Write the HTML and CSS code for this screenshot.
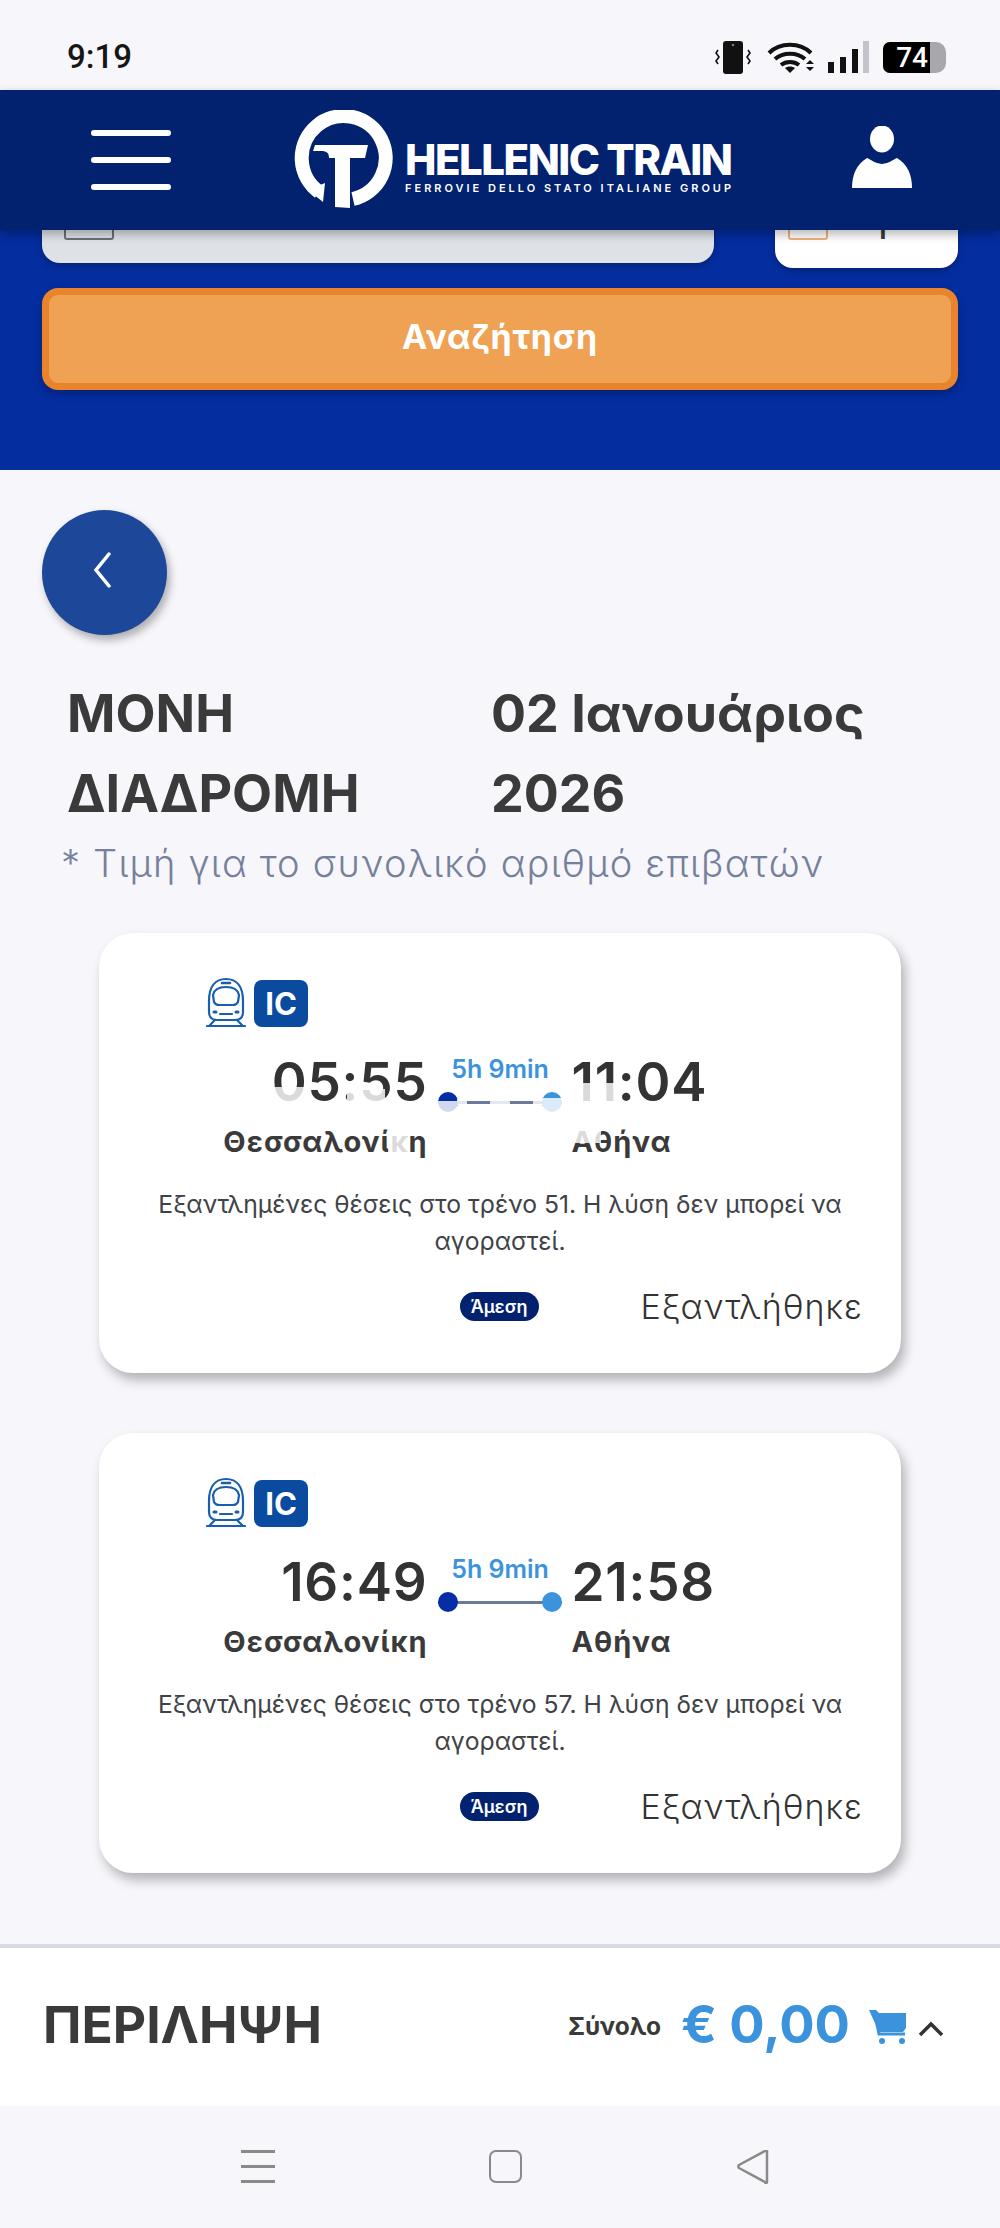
FILE: index.html
```html
<!DOCTYPE html>
<html lang="el">
<head>
  <meta charset="UTF-8" />
  <meta name="viewport" content="width=device-width, initial-scale=1.0" />
  <title>Hellenic Train</title>
  <link rel="stylesheet" href="styles.css">
</head>
<body>
  <svg class="defs" width="0" height="0">
    <symbol id="train" viewBox="0 0 40 50">
      <g fill="none" stroke="#1a5fae" stroke-width="2.200" stroke-linecap="round" stroke-linejoin="round">
        <path d="M3 24C3 10 9 2 20 2s17 8 17 22v11c0 5-3 8-8 8H11c-5 0-8-3-8-8z"/>
        <path d="M7 18c1-5 5-8 13-8s12 3 13 8l-1 7c-1 2-3 3-5 3H13c-2 0-4-1-5-3z"/>
        <path d="M16 6h8" stroke-width="2.600"/>
        <path d="M8 35h2M30 35h2" stroke-width="3"/>
        <path d="M14 37h12M9 43l-5 5M31 43l5 5M1 49h38"/>
      </g>
    </symbol>
  </svg>

  <div class="status-bar">
    <span class="clock">9:19</span>
    <div class="status-icons">
      <svg class="vibrate" width="36" height="34" viewBox="0 0 36 34">
        <rect x="8" y="1" width="20" height="33" rx="3" fill="#111"/>
        <circle cx="18" cy="5" r="1.300" fill="#777"/>
        <path d="M3 10l-2 3 3 4-3 4 2 3M33 10l2 3-3 4 3 4-2 3" fill="none" stroke="#111" stroke-width="1.600"/>
      </svg>
      <svg width="48" height="34" viewBox="0 0 48 34">
        <g fill="none" stroke="#111" stroke-width="4">
          <path d="M2 13C13 2 33 2 44 13"/>
          <path d="M8 19c8-7 22-7 30 0"/>
          <path d="M14 25c5-4 13-4 18 0"/>
        </g>
        <path d="M18 28c3-2 7-2 10 0l-5 5z" fill="#111"/>
        <path d="M43 20l4 4h-8zM39 27h8l-4 4z" fill="#111"/>
      </svg>
      <svg width="44" height="34" viewBox="0 0 44 34">
        <rect x="1" y="22" width="6" height="11" fill="#111"/>
        <rect x="13" y="17" width="6" height="16" fill="#111"/>
        <rect x="25" y="9" width="6" height="24" fill="#111"/>
        <rect x="36" y="1" width="6" height="32" fill="#c4c2cb"/>
      </svg>
      <div class="battery"><span class="battery-level">74</span></div>
    </div>
  </div>

  <header class="top-nav">
    <div class="burger"><span></span><span></span><span></span></div>
    <div class="logo">
      <svg class="logo-mark" width="104" height="100" viewBox="0 0 104 100">
        <path d="M26 82A42 42 0 1 1 60 89" fill="none" stroke="#fff" stroke-width="14"/>
        <path d="M15 80l17-7-2 19z" fill="#fff"/>
        <path d="M22 35h53l-3 13H57v50l-15 -1V48H36c0-5-2-7-8-7h-8z" fill="#fff"/>
      </svg>
      <div class="logo-text">
        <div class="logo-name">HELLENIC TRAIN</div>
        <div class="logo-sub">FERROVIE DELLO STATO ITALIANE GROUP</div>
      </div>
    </div>
    <svg class="user-icon" width="60" height="64" viewBox="0 0 60 64">
      <ellipse cx="30" cy="13" rx="12" ry="13.500" fill="#fff"/>
      <path d="M0 62c0-14 5-24 15-30 5 2 7 5 15 6 8-1 10-4 15-6 10 6 15 16 15 30z" fill="#fff"/>
    </svg>
  </header>

  <section class="search-band">
    <div class="search-fields">
      <div class="field field-date"><span class="field-icon"></span></div>
      <div class="field field-pax"><span class="field-icon field-icon-pax"></span><span class="pax-count">1</span></div>
    </div>
    <button class="search-btn">Αναζήτηση</button>
  </section>

  <main class="results">
    <button class="back-btn">
      <svg width="19" height="36" viewBox="0 0 19 36"><path d="M16 2L3 18l13 16" fill="none" stroke="#fff" stroke-width="3.500" stroke-linecap="round"/></svg>
    </button>

    <div class="trip-title">
      <h2>ΜΟΝΗ ΔΙΑΔΡΟΜΗ</h2>
      <h2>02 Ιανουάριος 2026</h2>
    </div>
    <p class="price-note">* Τιμή για το συνολικό αριθμό επιβατών</p>

    <article class="card">
      <div class="train-type">
        <svg class="train-icon" width="40" height="50"><use href="#train"/></svg>
        <span class="ic-badge">IC</span>
      </div>
      <div class="route">
        <div class="stop stop-from">
          <div class="time">05:55</div>
          <div class="station">Θεσσαλονίκη</div>
        </div>
        <div class="leg">
          <div class="duration">5h 9min</div>
          <div class="line"><span class="dot dot-start"></span><span class="dot dot-end"></span></div>
        </div>
        <div class="stop">
          <div class="time">11:04</div>
          <div class="station">Αθήνα</div>
        </div>
      </div>
      <p class="message">Εξαντλημένες θέσεις στο τρένο 51. Η λύση δεν μπορεί να αγοραστεί.</p>
      <div class="card-foot">
        <span class="direct">Άμεση</span>
        <span class="sold-out">Εξαντλήθηκε</span>
      </div>
      <!-- half painted strips seen in the capture -->
      <span class="fade fade-a"></span>
      <span class="fade fade-b"></span>
      <span class="fade fade-c"></span>
      <span class="fade fade-d"></span>
      <span class="fade fade-e"></span>
      <span class="fade fade-f"></span>
      <span class="fade fade-g"></span>
      <span class="fade fade-h"></span>
      <span class="fade fade-i"></span>
      <span class="fade fade-j"></span>
      <span class="fade fade-k"></span>
    </article>

    <article class="card">
      <div class="train-type">
        <svg class="train-icon" width="40" height="50"><use href="#train"/></svg>
        <span class="ic-badge">IC</span>
      </div>
      <div class="route">
        <div class="stop stop-from">
          <div class="time">16:49</div>
          <div class="station">Θεσσαλονίκη</div>
        </div>
        <div class="leg">
          <div class="duration">5h 9min</div>
          <div class="line"><span class="dot dot-start"></span><span class="dot dot-end"></span></div>
        </div>
        <div class="stop">
          <div class="time">21:58</div>
          <div class="station">Αθήνα</div>
        </div>
      </div>
      <p class="message">Εξαντλημένες θέσεις στο τρένο 57. Η λύση δεν μπορεί να αγοραστεί.</p>
      <div class="card-foot">
        <span class="direct">Άμεση</span>
        <span class="sold-out">Εξαντλήθηκε</span>
      </div>
    </article>
  </main>

  <footer class="summary">
    <div class="summary-title">ΠΕΡΙΛΗΨΗ</div>
    <div class="summary-total">
      <span class="total-label">Σύνολο</span>
      <span class="total-price">€ 0,00</span>
      <svg class="cart" width="38" height="36" viewBox="0 0 38 36">
        <path d="M0 2h7l3 3h27v15l-3 4H10z" fill="#3b93dc"/>
        <path d="M5 2l5 24h26" fill="none" stroke="#3b93dc" stroke-width="3"/>
        <circle cx="13" cy="33" r="3" fill="#3b93dc"/>
        <circle cx="33" cy="33" r="3" fill="#3b93dc"/>
      </svg>
      <svg class="chevron" width="26" height="16" viewBox="0 0 26 16"><path d="M2 14L13 3l11 11" fill="none" stroke="#333" stroke-width="3.500"/></svg>
    </div>
  </footer>

  <nav class="android-nav">
    <div class="nav-menu"><span></span><span></span><span></span></div>
    <div class="nav-home"></div>
    <svg width="34" height="34" viewBox="0 0 34 34"><path d="M31 2v30a1 1 0 0 1-2 0L3 18a2 2 0 0 1 0-3L29 1a1 1 0 0 1 2 1z" fill="none" stroke="#8a8a8a" stroke-width="2.500" stroke-linejoin="round"/></svg>
  </nav>
</body>
</html>
```

FILE: styles.css
```css
* {
  box-sizing: border-box;
}
body {
  margin: 0;
  width: 1000px;
  height: 2228px;
  overflow: hidden;
  background: #f6f6fb;
  color: #3a3a3a;
  font-family: Inter, "Noto Sans", sans-serif;
}
.defs {
  position: absolute;
}
h2, p {
  margin: 0;
}

/* status bar */
.status-bar {
  height: 90px;
  padding: 39px 54px 0 67px;
  display: flex;
  justify-content: space-between;
}
.clock {
  font-family: Roboto, sans-serif;
  font-size: 33px;
  font-weight: 500;
  line-height: 36px;
  color: #161616;
}
.status-icons {
  display: flex;
  gap: 12px;
  height: 34px;
  margin-top: 1px;
}
.vibrate {
  margin-right: 4px;
}
.battery {
  width: 63px;
  height: 31px;
  margin-top: 2px;
  border-radius: 7px 10px 10px 7px;
  background: #a9a7ae;
  overflow: hidden;
}
.battery-level {
  display: block;
  width: 47px;
  height: 31px;
  padding-right: 2px;
  background: #000;
  color: #fff;
  font-family: Roboto, sans-serif;
  font-size: 28px;
  font-weight: 500;
  line-height: 31px;
  text-align: right;
}

/* header */
.top-nav {
  position: relative;
  z-index: 2;
  height: 140px;
  background: #02216f;
  box-shadow: 0 4px 10px rgba(0, 0, 0, .3);
  display: flex;
  align-items: flex-start;
}
.burger {
  width: 80px;
  margin: 40px 0 0 91px;
}
.burger span {
  display: block;
  height: 6px;
  margin-bottom: 21px;
  background: #fff;
  border-radius: 3px;
}
.logo {
  display: flex;
  margin: 20px 0 0 122px;
}
.logo-mark {
  flex-shrink: 0;
}
.logo-text {
  margin: 32px 0 0 8px;
  color: #fff;
}
.logo-name {
  font-size: 42px;
  font-weight: 800;
  line-height: 36px;
  letter-spacing: -1.500px;
  white-space: nowrap;
}
.logo-sub {
  margin-top: 3px;
  font-size: 11px;
  font-weight: 600;
  line-height: 14px;
  letter-spacing: 3px;
  white-space: nowrap;
}
.user-icon {
  margin: 36px 88px 0 auto;
}

/* search band, only the bottom of the form is visible */
.search-band {
  height: 240px;
  padding: 0 42px;
  overflow: hidden;
  background: #042d9f;
}
.search-fields {
  display: flex;
  justify-content: space-between;
  align-items: flex-start;
  margin-top: -67px;
}
.field {
  height: 100px;
  border-radius: 0 0 18px 18px;
  box-shadow: 0 3px 6px rgba(0, 0, 0, .25);
  display: flex;
  align-items: flex-end;
  padding-bottom: 23px;
}
.field-date {
  width: 672px;
  padding-left: 22px;
  background: #dee2e6;
}
.field-pax {
  width: 183px;
  height: 105px;
  padding-left: 13px;
  padding-bottom: 28px;
  background: #fff;
}
.field-icon {
  display: block;
  width: 50px;
  height: 30px;
  border: 2px solid #6c7077;
  border-radius: 3px;
}
.field-icon-pax {
  width: 40px;
  border-color: #efb27a;
}
.pax-count {
  margin-left: 44px;
  font-size: 40px;
  line-height: 30px;
  color: #343a40;
}
.search-btn {
  display: block;
  width: 916px;
  height: 102px;
  margin-top: 20px;
  padding-bottom: 6px;
  border: 7px solid #e8842c;
  border-radius: 16px;
  background: #f0a254;
  box-shadow: 0 4px 8px rgba(0, 0, 0, .25);
  color: #fff;
  font-family: Inter, sans-serif;
  font-size: 34px;
  font-weight: 700;
  letter-spacing: .8px;
}

/* results */
.results {
  height: 1474px;
  padding: 40px 0 0 42px;
}
.back-btn {
  display: flex;
  align-items: center;
  justify-content: center;
  width: 125px;
  height: 125px;
  padding: 0 4px 6px 0;
  border: 0;
  border-radius: 50%;
  background: #1d4899;
  box-shadow: 3px 5px 9px rgba(0, 0, 0, .3);
}
.trip-title {
  display: grid;
  grid-template-columns: 424px 440px;
  margin: 39px 0 0 25px;
}
.trip-title h2 {
  font-size: 52px;
  font-weight: 700;
  line-height: 80px;
}
.price-note {
  margin: 4px 0 0 19px;
  font-size: 38px;
  font-weight: 300;
  line-height: 50px;
  letter-spacing: 1.200px;
  color: #75809b;
}
.card {
  position: relative;
  width: 802px;
  height: 440px;
  margin: 45px 0 0 57px;
  padding-top: 44px;
  border-radius: 34px;
  background: #fff;
  box-shadow: 4px 7px 12px rgba(0, 0, 0, .28);
}
.card + .card {
  margin-top: 60px;
}
.train-type {
  display: flex;
  align-items: flex-end;
  gap: 8px;
  margin-left: 107px;
}
.ic-badge {
  width: 54px;
  height: 47px;
  border-radius: 8px;
  background: #0a4ba0;
  color: #fff;
  font-size: 31px;
  font-weight: 700;
  line-height: 47px;
  text-align: center;
}
.route {
  display: flex;
  margin-top: 25px;
}
.stop {
  width: 330px;
}
.stop-from {
  width: 329px;
  text-align: right;
}
.time {
  font-size: 53px;
  font-weight: 600;
  line-height: 60px;
  letter-spacing: .8px;
  color: #333;
}
.station {
  margin-top: 9px;
  font-size: 29px;
  font-weight: 700;
  line-height: 42px;
  letter-spacing: 1px;
  color: #3a3a3a;
}
.leg {
  width: 144px;
  padding: 0 9px 0 10px;
}
.duration {
  margin-top: 1px;
  font-size: 25px;
  font-weight: 600;
  line-height: 32px;
  text-align: center;
  color: #3b93dc;
}
.line {
  position: relative;
  height: 3px;
  margin-top: 16px;
  background: #6b7a99;
}
.dot {
  position: absolute;
  top: -9px;
  width: 20px;
  height: 20px;
  border-radius: 50%;
}
.dot-start {
  left: 0;
  background: #042da6;
}
.dot-end {
  right: 0;
  background: #3b93dc;
}
.message {
  width: 700px;
  margin: 23px auto 0;
  font-size: 24.700px;
  line-height: 37px;
  text-align: center;
  color: #3f4347;
}
.card-foot {
  display: flex;
  align-items: center;
  justify-content: flex-end;
  height: 40px;
  margin-top: 26px;
  padding-right: 38px;
}
.direct {
  width: 79px;
  height: 29px;
  border-radius: 15px;
  background: #02216f;
  color: #fff;
  font-size: 18px;
  font-weight: 600;
  line-height: 29px;
  text-align: center;
}
.sold-out {
  margin-left: 102px;
  font-size: 34px;
  font-weight: 300;
  letter-spacing: 1px;
  color: #333;
}

/* bits of the first card that did not finish painting */
.fade {
  position: absolute;
  background: rgba(255, 255, 255, .82);
}
.fade-a { left: 176px; top: 154px; width: 29px; height: 20px; }
.fade-b { left: 248px; top: 154px; width: 12px; height: 18px; }
.fade-c { left: 263px; top: 156px; width: 23px; height: 16px; }
.fade-d { left: 338px; top: 168px; width: 20px; height: 12px; }
.fade-e { left: 444px; top: 165px; width: 21px; height: 15px; }
.fade-f { left: 358px; top: 166px; width: 10px; height: 6px; }
.fade-g { left: 391px; top: 166px; width: 20px; height: 6px; }
.fade-h { left: 434px; top: 166px; width: 10px; height: 6px; }
.fade-i { left: 474px; top: 150px; width: 46px; height: 22px; }
.fade-j { left: 289px; top: 197px; width: 19px; height: 25px; }
.fade-k { left: 474px; top: 197px; width: 28px; height: 13px; }

/* summary bar */
.summary {
  height: 162px;
  padding: 0 56px 6px 43px;
  border-top: 4px solid #d6dae3;
  background: #fff;
  display: flex;
  align-items: center;
  justify-content: space-between;
}
.summary-title {
  font-size: 51.500px;
  font-weight: 700;
  color: #3a3a3a;
}
.summary-total {
  display: flex;
  align-items: center;
}
.total-label {
  margin: 4px 20px 0 0;
  font-size: 24.500px;
  font-weight: 700;
}
.total-price {
  margin-right: 19px;
  font-size: 52.500px;
  font-weight: 700;
  color: #3b93dc;
}
.cart {
  margin-top: 4px;
}
.chevron {
  margin: 10px 0 0 11px;
}

/* android buttons */
.android-nav {
  display: flex;
  align-items: flex-start;
  gap: 214px;
  padding: 44px 0 0 241px;
}
.nav-menu {
  width: 34px;
}
.nav-menu span {
  display: block;
  height: 3px;
  margin-bottom: 12px;
  background: #8a8a8a;
}
.nav-home {
  width: 33px;
  height: 33px;
  border: 2.500px solid #8a8a8a;
  border-radius: 7px;
}
```
